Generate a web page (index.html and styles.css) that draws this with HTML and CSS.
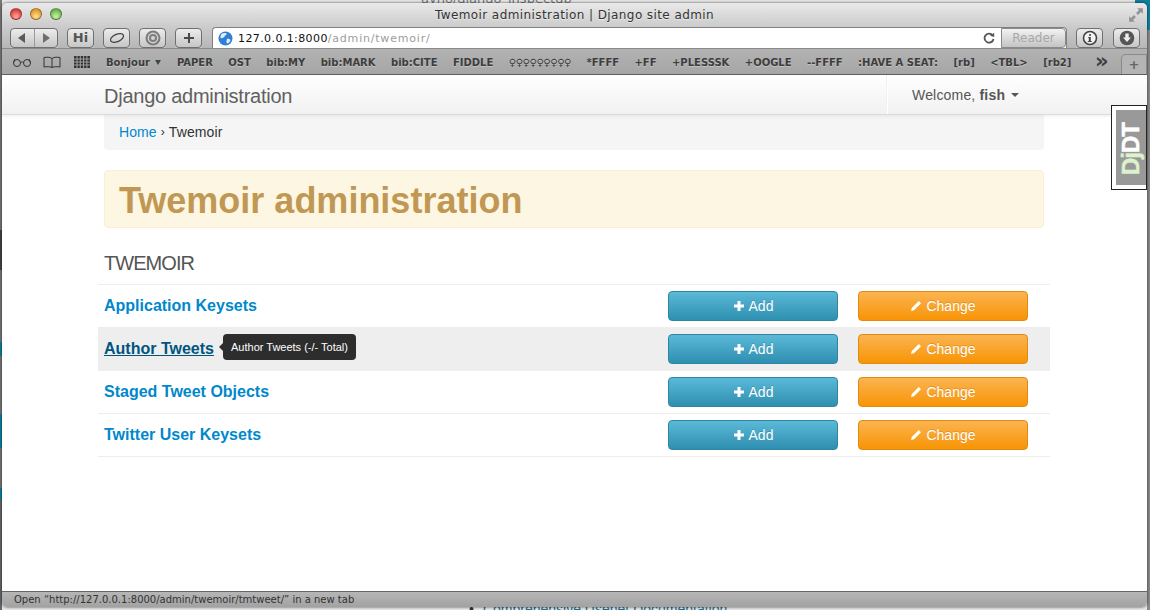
FILE: index.html
```html
<!DOCTYPE html>
<html lang="en">
<head>
<meta charset="utf-8">
<title>Twemoir administration | Django site admin</title>
<link rel="stylesheet" href="styles.css">
</head>
<body>
<div class="desktop">
  <div class="behind-top">ayno/django_inspectdb</div>
  <div class="behind-bottom"><span class="bullet">•</span>Comprehensive Usenet Documentation</div>
  <div class="window">
    <div class="chrome">
      <div class="titlebar">
        <div class="lights"><span class="light red"></span><span class="light amber"></span><span class="light green"></span></div>
        <div class="title">Twemoir administration | Django site admin</div>
        <svg class="resize" width="16" height="16" viewBox="0 0 14 14"><path d="M8 1h5v5l-1.700-1.700-2.600 2.600-1.600-1.600 2.600-2.600zM6 13H1V8l1.700 1.700 2.600-2.600 1.600 1.600-2.600 2.600z" fill="#939393"/></svg>
      </div>
      <div class="toolbar">
        <div class="tbtn seg">
          <span class="seg-part"><svg width="10" height="10" viewBox="0 0 10 10"><path d="M8 0v10L1 5z" fill="#5a5a5a"/></svg></span>
          <span class="seg-part"><svg width="10" height="10" viewBox="0 0 10 10"><path d="M2 0v10l7-5z" fill="#6e6e6e"/></svg></span>
        </div>
        <div class="tbtn hi">Hi</div>
        <div class="tbtn"><svg width="16" height="12" viewBox="0 0 16 12"><ellipse cx="8" cy="6" rx="7" ry="3.600" transform="rotate(-24 8 6)" fill="none" stroke="#444" stroke-width="1.300"/></svg></div>
        <div class="tbtn"><svg width="18" height="18" viewBox="0 0 18 18"><circle cx="9" cy="9" r="7.500" fill="#7d7d7d"/><circle cx="9" cy="9" r="5.400" fill="#d4d4d4"/><circle cx="9" cy="9" r="4" fill="#7d7d7d"/><circle cx="9" cy="9" r="2" fill="#d4d4d4"/></svg></div>
        <div class="tbtn"><svg width="12" height="12" viewBox="0 0 12 12"><path d="M5 1h2v4h4v2H7v4H5V7H1V5h4z" fill="#4a4a4a"/></svg></div>
        <div class="urlbar">
          <svg class="globe" width="15" height="15" viewBox="0 0 15 15"><circle cx="7.500" cy="7.500" r="7" fill="#2f7fd6"/><path d="M4 2.500c2-1 4-.5 5 .5-1 1.500-2 1-2.500 2.500-.5 1.500-2 1-3.500 2-1-1.500-.5-3.500 1-5zM9 8c2-.5 3 .5 3.500 1-.5 2-2 3.500-3.500 3.500-1-1-.5-3 0-4.500z" fill="#dfeefa"/></svg>
          <span class="host">127.0.0.1:8000</span><span class="path">/admin/twemoir/</span>
          <svg class="reload" width="12" height="12" viewBox="0 0 12 12"><path d="M9.700 3.500A4.500 4.500 0 1 0 10.500 7" fill="none" stroke="#555" stroke-width="1.800"/><path d="M7 3.800 11.200 5V.8z" fill="#555"/></svg>
          <div class="reader">Reader</div>
        </div>
        <div class="tbtn round"><svg width="16" height="16" viewBox="0 0 16 16"><circle cx="8" cy="8" r="6.500" fill="#f2f2f2" stroke="#444" stroke-width="1.600"/><circle cx="8" cy="5" r="1.100" fill="#444"/><path d="M6.500 7h2.300v4h1v1h-4v-1h1V8h-.8z" fill="#444"/></svg></div>
        <div class="tbtn round"><svg width="16" height="16" viewBox="0 0 16 16"><circle cx="8" cy="8" r="7.300" fill="#555"/><path d="M6.300 3.500h3.400v4h2.300L8 12 4 7.500h2.300z" fill="#eee"/></svg></div>
      </div>
      <div class="bookmarks">
        <svg class="bm-icon glasses" width="20" height="10" viewBox="0 0 20 10"><circle cx="5" cy="6" r="3.500" fill="none" stroke="#333"/><circle cx="15" cy="6" r="3.500" fill="none" stroke="#333"/><path d="M8.500 5.500c1-.7 2-.7 3 0M1.500 5.500 3 2M18.500 5.500 17 2" fill="none" stroke="#333"/></svg>
        <svg class="bm-icon book" width="18" height="12" viewBox="0 0 18 12"><path d="M9 2.500C7 1 4 1 1 1.500V11c3-.5 6-.5 8 .5 2-1 5-1 8-.5V1.500C14 1 11 1 9 2.500zM9 2.500v9" fill="none" stroke="#333"/></svg>
        <svg class="bm-icon grid-icon" width="16" height="12" viewBox="0 0 16 12"><path d="M0 0h16v12H0z" fill="#333"/><path d="M3 0v12M6.300 0v12M9.600 0v12M12.900 0v12M0 3h16M0 6h16M0 9h16" stroke="#aaa" stroke-width=".9"/></svg>
        <div class="bm-list">
          <span>Bonjour <i class="bm-caret"></i></span>
          <span>PAPER</span><span>OST</span><span>bib:MY</span><span>bib:MARK</span><span>bib:CITE</span><span>FIDDLE</span>
          <span class="thin">♀♀♀♀♀♀♀♀♀</span>
          <span>*FFFF</span><span>+FF</span><span>+PLESSSK</span><span>+OOGLE</span><span>--FFFF</span><span>:HAVE A SEAT:</span><span>[rb]</span><span>&lt;TBL&gt;</span><span>[rb2]</span>
        </div>
        <span class="more">»</span>
        <div class="newtab">+</div>
      </div>
    </div>

    <div class="page">
      <div class="navbar">
        <div class="container nav-inner">
          <a class="brand">Django administration</a>
          <div class="user"><span>Welcome, <b>fish</b></span><i class="caret"></i></div>
        </div>
      </div>
      <div class="container">
        <div class="breadcrumb"><a>Home</a><span class="sep">›</span><span>Twemoir</span></div>
        <div class="hero"><h1>Twemoir administration</h1></div>
        <h2 class="section">TWEMOIR</h2>
        <div class="models">
          <div class="row"><a class="model">Application Keysets</a>
            <div class="actions"><a class="btn info"><svg class="plus" viewBox="0 0 12 12"><path d="M4.500 1h3v3.500H11v3H7.500V11h-3V7.500H1v-3h3.500z"/></svg>Add</a><a class="btn warn"><svg class="pen" viewBox="0 0 12 12"><path d="M8.800 1 11 3.200 4 10.200 1 11l.8-3zM1.500 11z"/></svg>Change</a></div></div>
          <div class="row hover"><a class="model">Author Tweets</a><div class="tooltip">Author Tweets (-/- Total)</div>
            <div class="actions"><a class="btn info"><svg class="plus" viewBox="0 0 12 12"><path d="M4.500 1h3v3.500H11v3H7.500V11h-3V7.500H1v-3h3.500z"/></svg>Add</a><a class="btn warn"><svg class="pen" viewBox="0 0 12 12"><path d="M8.800 1 11 3.200 4 10.200 1 11l.8-3zM1.500 11z"/></svg>Change</a></div></div>
          <div class="row"><a class="model">Staged Tweet Objects</a>
            <div class="actions"><a class="btn info"><svg class="plus" viewBox="0 0 12 12"><path d="M4.500 1h3v3.500H11v3H7.500V11h-3V7.500H1v-3h3.500z"/></svg>Add</a><a class="btn warn"><svg class="pen" viewBox="0 0 12 12"><path d="M8.800 1 11 3.200 4 10.200 1 11l.8-3zM1.500 11z"/></svg>Change</a></div></div>
          <div class="row"><a class="model">Twitter User Keysets</a>
            <div class="actions"><a class="btn info"><svg class="plus" viewBox="0 0 12 12"><path d="M4.500 1h3v3.500H11v3H7.500V11h-3V7.500H1v-3h3.500z"/></svg>Add</a><a class="btn warn"><svg class="pen" viewBox="0 0 12 12"><path d="M8.800 1 11 3.200 4 10.200 1 11l.8-3zM1.500 11z"/></svg>Change</a></div></div>
        </div>
      </div>
      <div class="djdt"><span class="djdt-text"><em>Dj</em>DT</span></div>
    </div>

    <div class="status">Open “http://127.0.0.1:8000/admin/twemoir/tmtweet/” in a new tab</div>
  </div>
</div>
</body>
</html>
```
FILE: styles.css
```css
* { box-sizing: border-box; }
html, body { margin: 0; height: 100%; overflow: hidden; }
body { font-family: "Liberation Sans", Arial, sans-serif; color: #333; }

.desktop {
  position: relative; width: 1150px; height: 610px; padding: 3px 3px 3px 2px; overflow: hidden;
  background:
    linear-gradient(#0f7f9e, #0f7f9e) 1135px 0 / 15px 30px no-repeat,
    linear-gradient(#777 0 230px, #444 230px 270px, #777 270px 342px, #0f7f9e 342px 356px, #777 356px 414px, #0f7f9e 414px 448px, #777 448px 488px, #0f7f9e 488px 500px, #666 500px) 0 0 / 2px 100% no-repeat,
    linear-gradient(to right, transparent 1147px, #8a8a8a 1147px),
    #e8e8e8;
}
.behind-top { position: absolute; left: 421px; top: -9px; font: 13px "DejaVu Sans", sans-serif; color: #777; }
.behind-bottom { position: absolute; left: 469px; top: 601px; font: 14px "Liberation Sans", sans-serif; color: #1f6d8c; }
.bullet { color: #333; margin-right: 9px; }

.window { position: relative; height: 604px; display: flex; flex-direction: column; border-radius: 5px; box-shadow: 0 0 3px rgba(0,0,0,.7); overflow: hidden; background: #fff; }

.chrome { height: 72px; flex: none; background: #aaa; border-bottom: 1px solid #5f5f5f; }
.titlebar { height: 24px; display: flex; align-items: center; position: relative; justify-content: center; background: linear-gradient(#e9e9e9, #cbcbcb); }
.lights { position: absolute; left: 8px; top: 5px; display: flex; gap: 8px; }
.light { width: 12px; height: 12px; border-radius: 50%; border: 1px solid rgba(0,0,0,.35); }
.red { background: radial-gradient(circle at 50% 75%, #ffa8a0, #e0433d 70%); }
.amber { background: radial-gradient(circle at 50% 75%, #ffe09a, #e39c2c 70%); }
.green { background: radial-gradient(circle at 50% 75%, #d0f2ae, #6bb84c 70%); }
.title { font: 12px "DejaVu Sans", sans-serif; color: #333; letter-spacing: .41px; text-shadow: 0 1px 0 rgba(255,255,255,.5); }
.resize { position: absolute; right: 3px; top: 4px; }

.toolbar { height: 21px; display: flex; align-items: center; padding-left: 8px; padding-right: 9px; gap: 9px; background: linear-gradient(#cbcbcb, #b6b6b6); }
.tbtn { width: 27px; height: 20px; flex: none; display: flex; align-items: center; justify-content: center; border: 1px solid #707070; border-radius: 4px; background: linear-gradient(#ececec, #c6c6c6); box-shadow: 0 1px 0 rgba(255,255,255,.45); }
.seg { width: 48px; }
.seg-part { flex: 1; height: 100%; display: flex; align-items: center; justify-content: center; }
.seg-part + .seg-part { border-left: 1px solid #9b9b9b; }
.hi { font: bold 13px "DejaVu Sans", sans-serif; color: #555; }
.urlbar { width: 855px; height: 21px; flex: none; display: flex; align-items: center; padding-left: 5px; margin-left: 1px; background: #fff; border: 1px solid #808080; border-bottom: 0; border-radius: 4px 4px 0 0; font: 11px "DejaVu Sans", sans-serif; }
.globe { margin-right: 5px; flex: none; }
.host { color: #111; letter-spacing: .4px; }
.path { color: #9c9c9c; letter-spacing: .8px; flex: 1; }
.reload { flex: none; margin-right: 6px; }
.reader { width: 65px; height: 20px; flex: none; display: flex; align-items: center; justify-content: center; font-size: 12px; color: #a8a8a8; background: linear-gradient(#f2f2f2, #c4c4c4); border: 1px solid #8a8a8a; border-radius: 0 4px 4px 0; }
.round { width: 27px; }
.toolbar .round:last-child { margin-left: 1px; }

.bookmarks { height: 26px; display: flex; align-items: center; padding-left: 10px; position: relative; background: linear-gradient(#b2b2b2, #a6a6a6); border-top: 1px solid #8a8a8a; }
.bm-icon { flex: none; }
.glasses { margin-right: 11px; }
.book { margin-right: 13px; }
.grid-icon { margin-right: 16px; }
.bm-list { display: flex; gap: 15.45px; padding-top: 2px; font: bold 10px "DejaVu Sans", sans-serif; color: #3d3d3d; white-space: nowrap; text-shadow: 0 1px 0 rgba(255,255,255,.3); }
.thin { font-weight: normal; letter-spacing: -.4px; }
.bm-caret { display: inline-block; margin-left: 2px; vertical-align: 1px; border: 3.500px solid transparent; border-top: 5px solid #444; border-bottom: 0; }
.more { position: absolute; left: 1093px; top: 0; font: bold 21px "DejaVu Sans", sans-serif; color: #3d3d3d; }
.newtab { position: absolute; left: 1119px; top: 5px; width: 26px; height: 20px; text-align: center; font: bold 13px/20px "DejaVu Sans", sans-serif; color: #666; border: 1px solid #8a8a8a; border-bottom: 0; border-radius: 5px 0 0 0; background: #b4b4b4; }

.page { flex: 1; position: relative; background: #fff; overflow: hidden; }
.container { width: 940px; margin-left: 102px; }
.navbar { height: 40px; background: linear-gradient(#fff, #f1f1f1); border-bottom: 1px solid #dcdcdc; box-shadow: 0 1px 4px rgba(0,0,0,.08); position: relative; z-index: 1; }
.nav-inner { display: flex; align-items: center; justify-content: space-between; height: 39px; }
.brand { font-size: 20px; color: #606060; letter-spacing: -.25px; padding-top: 3px; }
.user { width: 157px; height: 39px; border-left: 1px solid #fff; box-shadow: -1px 0 0 #f0f0f0; display: flex; align-items: center; padding-left: 24px; font-size: 14px; color: #555; gap: 6px; margin-left: auto; letter-spacing: .18px; }
.caret { border: 4px solid transparent; border-top-color: #555; border-bottom: 0; margin-top: 1px; }

.breadcrumb { height: 35px; padding: 0 15px 2px; display: flex; align-items: center; gap: 4px; background: #f5f5f5; border-radius: 0 0 4px 4px; font-size: 14px; color: #333; letter-spacing: .1px; }
.breadcrumb a { color: #0088cc; }
.sep { font-size: 12px; }
.hero { margin-top: 20px; height: 58px; padding: 0 14px; display: flex; align-items: center; background: #fdf6e3; border: 1px solid #fbeed5; border-radius: 4px; }
.hero h1 { margin: 4px 0 0; font-size: 36px; font-weight: bold; color: #c09853; line-height: 50px; }
.section { margin: 23px 0 0; height: 33px; font-size: 20px; font-weight: normal; line-height: 24px; color: #555; letter-spacing: -.95px; }

.models { margin: 0 -6px; border-bottom: 1px solid #eee; }
.row { position: relative; height: 43px; display: flex; align-items: center; padding-left: 6px; padding-right: 22px; border-top: 1px solid #eee; }
.row.hover { background: #eee; }
.model { font-size: 16px; font-weight: bold; color: #0088cc; margin-top: -1px; }
.hover .model { color: #005580; text-decoration: underline; }
.actions { margin-left: auto; display: flex; gap: 20px; }
.btn { width: 170px; height: 30px; display: flex; align-items: center; justify-content: center; gap: 4px; font-size: 14px; color: #fff; border-radius: 4px; text-shadow: 0 -1px 0 rgba(0,0,0,.15); }
.info { background: linear-gradient(#5bb9d8, #2f8fb0); border: 1px solid #2f86a3; }
.warn { background: linear-gradient(#fbb450, #f89406); border: 1px solid #e08a12; }
.plus, .pen { width: 12px; height: 12px; fill: #fff; flex: none; }
.tooltip { position: absolute; left: 125px; top: 6px; height: 26px; padding: 0 8px; display: flex; align-items: center; background: #2d2d2d; border-radius: 4px; font-size: 11px; color: #fff; }
.tooltip::before { content: ""; position: absolute; left: -4px; top: 9px; border: 4px solid transparent; border-right-color: #2d2d2d; border-left: 0; }

.djdt { position: absolute; z-index: 2; left: 1109px; top: 30px; width: 36px; height: 85px; background: #fff; border: 1px solid #222; }
.djdt::before { content: ""; position: absolute; left: 4px; top: 4px; right: 0; bottom: 4px; background: #999; }
.djdt-text { position: absolute; left: 4px; top: 4px; right: 0; bottom: 4px; padding-bottom: 3px; display: flex; align-items: center; justify-content: center; writing-mode: vertical-rl; transform: rotate(180deg); font-size: 24px; font-weight: bold; color: #fff; letter-spacing: -1px; -webkit-text-stroke: .5px currentColor; }
.djdt-text em { font-style: normal; color: #dcf2cc; }

.status { height: 16px; flex: none; padding-left: 12px; background: linear-gradient(#b6b6b6, #a2a2a2); border-top: 1px solid #666; font: 10px/15px "DejaVu Sans", sans-serif; color: #333; }
```
